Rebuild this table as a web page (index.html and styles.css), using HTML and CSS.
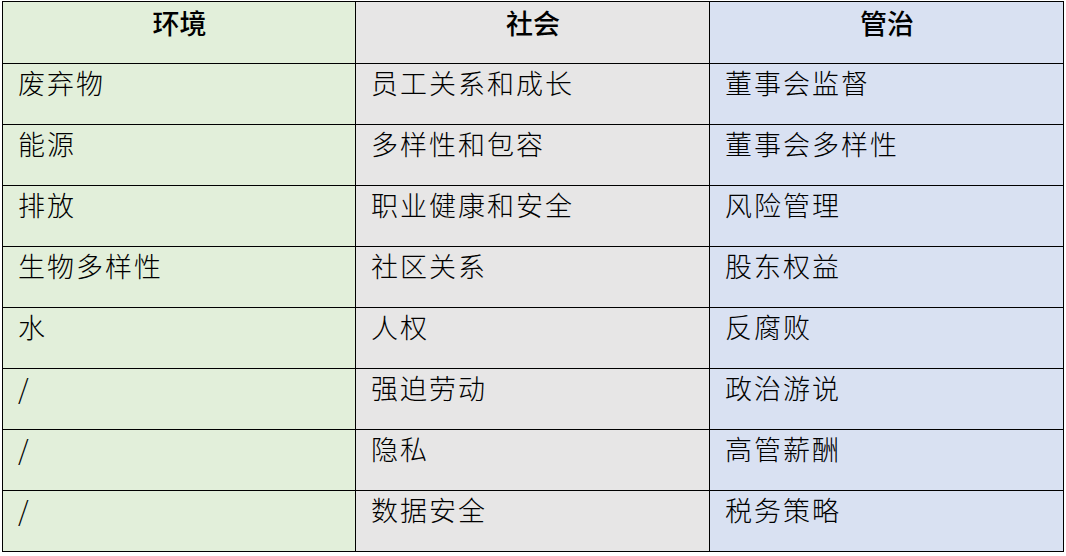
FILE: index.html
```html
<!DOCTYPE html>
<html lang="zh">
<head>
<meta charset="utf-8">
<link rel="stylesheet" href="styles.css">
</head>
<body>
<div class="page">
<table class="esg">
  <colgroup>
    <col class="c-env"><col class="c-soc"><col class="c-gov">
  </colgroup>
  <thead>
    <tr><th class="env">环境</th><th class="soc">社会</th><th class="gov">管治</th></tr>
  </thead>
  <tbody>
    <tr><td class="env">废弃物</td><td class="soc">员工关系和成长</td><td class="gov">董事会监督</td></tr>
    <tr><td class="env">能源</td><td class="soc">多样性和包容</td><td class="gov">董事会多样性</td></tr>
    <tr><td class="env">排放</td><td class="soc">职业健康和安全</td><td class="gov">风险管理</td></tr>
    <tr><td class="env">生物多样性</td><td class="soc">社区关系</td><td class="gov">股东权益</td></tr>
    <tr><td class="env">水</td><td class="soc">人权</td><td class="gov">反腐败</td></tr>
    <tr><td class="env">/</td><td class="soc">强迫劳动</td><td class="gov">政治游说</td></tr>
    <tr><td class="env">/</td><td class="soc">隐私</td><td class="gov">高管薪酬</td></tr>
    <tr><td class="env">/</td><td class="soc">数据安全</td><td class="gov">税务策略</td></tr>
  </tbody>
</table>
</div>
</body>
</html>
```
FILE: styles.css
```css
html, body {
  margin: 0;
  padding: 0;
  background: #ffffff;
}
.page {
  padding: 1px 0 0 2px;
}
.esg {
  border-collapse: collapse;
  table-layout: fixed;
  width: 1061px;
  font-family: "Noto Sans CJK SC", "Liberation Sans", sans-serif;
  font-size: 27px;
  color: #000;
}
.c-env { width: 353px; }
.c-soc { width: 354px; }
.c-gov { width: 354px; }
.esg th, .esg td {
  border: 1px solid #000;
  height: 61px;
  box-sizing: border-box;
  vertical-align: top;
  line-height: 34px;
  padding: 2px 14px 0 15px;
}
.esg th {
  font-weight: 500;
  text-align: center;
  height: 62px;
  padding-top: 4px;
}
.esg td {
  font-weight: 300;
  text-align: left;
  letter-spacing: 2px;
}
.env { background: #e2efda; }
.soc { background: #e7e6e6; }
.gov { background: #d9e1f2; }
```
